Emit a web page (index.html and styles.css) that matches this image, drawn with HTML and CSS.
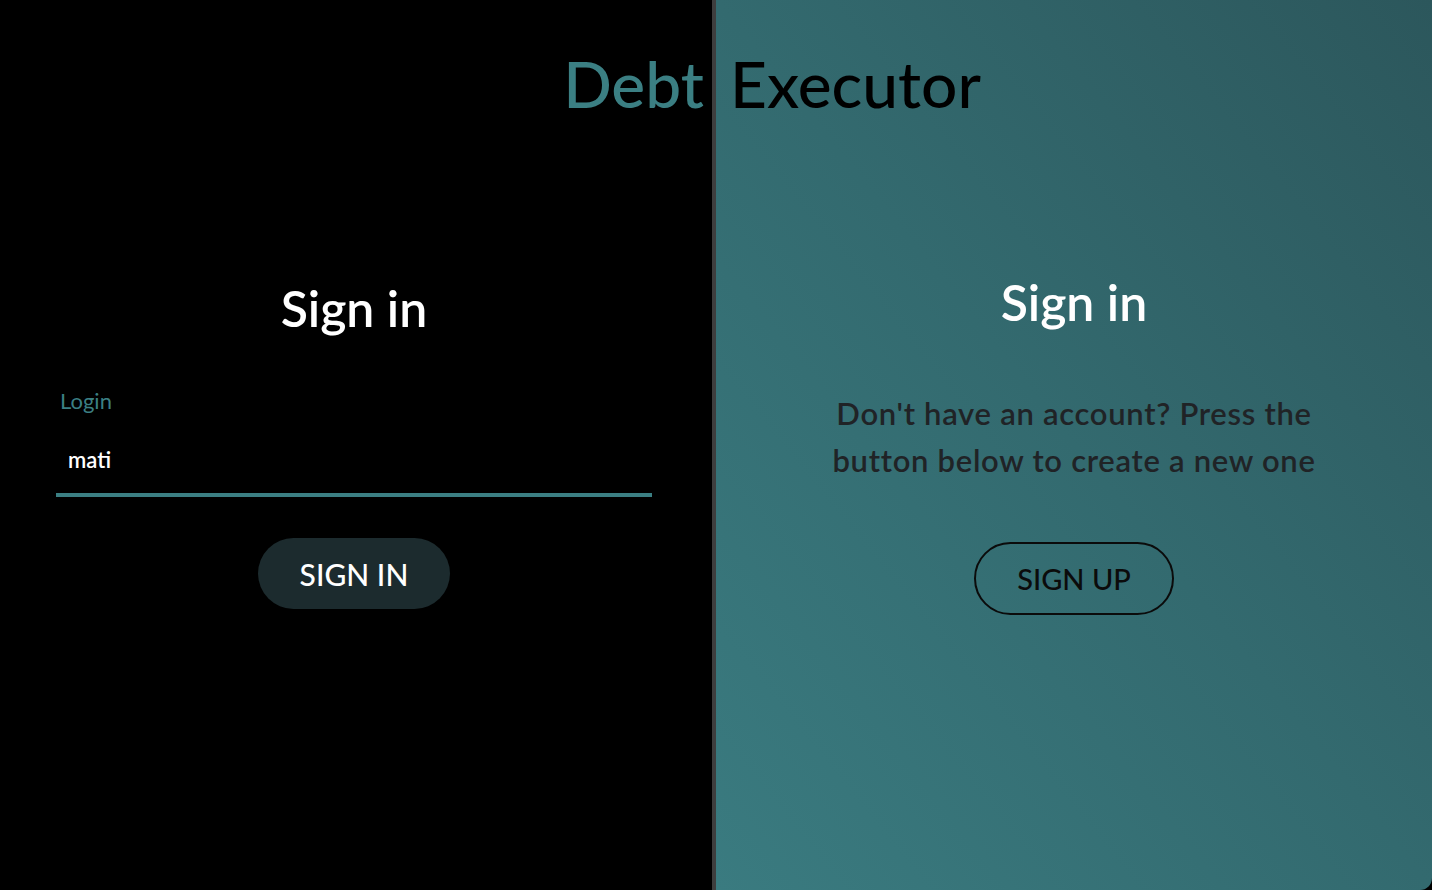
FILE: index.html
```html
<!DOCTYPE html>
<html>
<head>
<meta charset="utf-8">
<link rel="stylesheet" href="styles.css">
</head>
<body>
<div class="app">
  <h1 class="title"><span class="debt">Debt</span><span class="exec">Executor</span></h1>
  <section class="left">
    <h2 class="heading">Sign in</h2>
    <form class="form">
      <label class="label">Login</label>
      <div class="field">mati</div>
      <button type="button" class="btn-in">SIGN IN</button>
    </form>
  </section>
  <div class="divider"></div>
  <section class="right">
    <h2 class="heading heading-r">Sign in</h2>
    <p class="info">Don't have an account? Press the button below to create a new one</p>
    <button type="button" class="btn-up">SIGN UP</button>
  </section>
</div>
</body>
</html>
```

FILE: styles.css
```css
html, body {
  margin: 0;
  padding: 0;
  background: #000;
  width: 1432px;
  height: 890px;
  overflow: hidden;
  font-family: "Lato", "Noto Sans", sans-serif;
}
.app {
  position: relative;
  display: flex;
  width: 1432px;
  height: 890px;
  border-radius: 0 0 12px 12px;
  overflow: hidden;
}
.title {
  position: absolute;
  top: 44px;
  left: 0;
  width: 1432px;
  box-sizing: border-box;
  padding-left: 112px;
  margin: 0;
  display: flex;
  justify-content: center;
  gap: 26px;
  font-size: 64px;
  font-weight: 500;
  line-height: 80px;
  z-index: 2;
}
.debt { color: #3b7f83; }
.exec { color: #000; }
.left {
  width: 708px;
  padding-right: 4px;
  background: #000;
  display: flex;
  flex-direction: column;
  align-items: center;
}
.divider {
  width: 4px;
  background: #3e3e3e;
}
.right {
  flex: 1;
  background: linear-gradient(to top right, #3a7b80 0%, #336a6f 50%, #2c575c 100%);
  display: flex;
  flex-direction: column;
  align-items: center;
}
.heading {
  margin: 278px 0 0;
  font-size: 50px;
  font-weight: 600;
  line-height: 60px;
  color: #fff;
}
.heading-r { margin-top: 272px; }
.form {
  width: 596px;
  margin-top: 48px;
  display: flex;
  flex-direction: column;
  align-items: stretch;
}
.label {
  color: #3b7f83;
  font-size: 22px;
  line-height: 30px;
  padding-left: 4px;
}
.field {
  margin-top: 30px;
  color: #fff;
  font-size: 22px;
  font-weight: 600;
  line-height: 28px;
  padding: 0 12px 19px;
  border-bottom: 4px solid #3b7f83;
}
.btn-in {
  align-self: center;
  margin-top: 41px;
  width: 192px;
  height: 71px;
  border: 0;
  border-radius: 36px;
  background: #1c2b2e;
  color: #fff;
  font-family: inherit;
  font-size: 30px;
  font-weight: 500;
}
.info {
  margin: 58px 0 0;
  width: 540px;
  text-align: center;
  font-size: 31px;
  font-weight: 600;
  letter-spacing: 0.7px;
  line-height: 47px;
  color: #202326;
}
.btn-up {
  margin-top: 58px;
  width: 200px;
  height: 73px;
  border: 2px solid #0b0b0b;
  border-radius: 37px;
  background: transparent;
  color: #0b0b0b;
  font-family: inherit;
  font-size: 29px;
  font-weight: 500;
}
```
